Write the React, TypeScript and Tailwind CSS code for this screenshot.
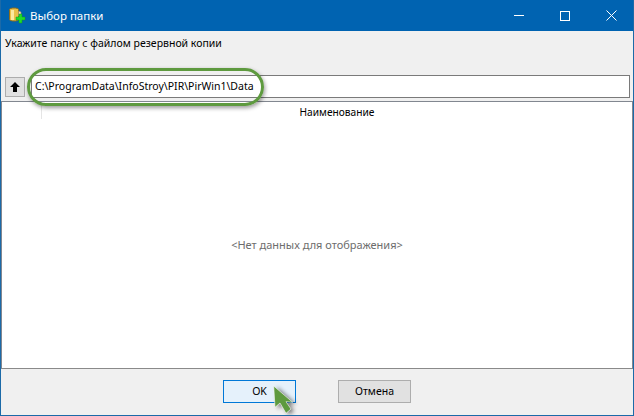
import React from "react";

function FolderIcon() {
  return (
    <svg width="17" height="17" viewBox="0 0 17 17" className="shrink-0">
      <path d="M0.5 2.5 C0.5 0.5 9.5 0.5 9.5 2.5 L9.5 12.5 C9.5 14.5 0.5 14.5 0.5 12.5 Z" fill="#e9c04a" stroke="#8a6d1f" strokeWidth="1" />
      <path d="M2 3 h3 v10 h-3 z" fill="#fbe9a0" />
      <path d="M9.5 4 L12 5 L12 9 L9.5 9 Z" fill="#f5e1c0" stroke="#a08a5a" strokeWidth="0.6" />
      <path d="M10 7 h3 v3 h3 v3 h-3 v3 h-3 v-3 h-3 v-3 h3 z" fill="#1fdc2a" stroke="#159a1d" strokeWidth="0.5" />
    </svg>
  );
}

function WindowButtons() {
  return (
    <div className="flex items-center h-full">
      <div className="w-[46px] flex items-center justify-center">
        <div className="w-[10px] h-px bg-white" />
      </div>
      <div className="w-[46px] flex items-center justify-center">
        <div className="w-[10px] h-[10px] border border-white" />
      </div>
      <div className="w-[46px] flex items-center justify-center">
        <svg width="11" height="11" viewBox="0 0 11 11">
          <path d="M0.5 0.5 L10.5 10.5 M10.5 0.5 L0.5 10.5" stroke="#fff" strokeWidth="1" />
        </svg>
      </div>
    </div>
  );
}

function Cursor() {
  return (
    <svg width="34" height="36" viewBox="0 0 34 36" className="absolute left-[270px] top-[384px] pointer-events-none">
      <defs>
        <filter id="cs" x="-30%" y="-30%" width="170%" height="170%">
          <feGaussianBlur stdDeviation="2" />
        </filter>
      </defs>
      <path d="M6 3 L7 25 L12 21 L18 31 L23 27 L18 20 L25 20 Z" fill="#000" opacity="0.5" filter="url(#cs)" />
      <path d="M2.7 2 L4 23.3 L9 19 L15 29.3 L20 25 L15 17.7 L21.7 18.3 Z" fill="#5e9a3f" stroke="#fff" strokeWidth="0.6" />
    </svg>
  );
}

export default function App() {
  return (
    <div
      className="relative w-[634px] h-[416px] bg-[#f0f0f0] flex flex-col border-b border-x border-[#1c6aa8] overflow-hidden text-[10.5px] text-black"
      style={{ fontFamily: '"Noto Sans", sans-serif' }}
    >
      {/* title bar */}
      <div className="h-[31px] shrink-0 bg-[#0063b1] flex items-center justify-between -mx-px">
        <div className="flex items-center pl-[9px] gap-[4px] text-white text-[11.5px]">
          <FolderIcon />
          <span>Выбор папки</span>
        </div>
        <WindowButtons />
      </div>

      <div className="h-[44px] shrink-0 pl-[4px] pt-[4px] leading-[16px]">
        Укажите папку с файлом резервной копии
      </div>

      {/* path row */}
      <div className="flex items-center h-[23px] shrink-0 pl-[4px] pr-[3px] gap-[6px]">
        <button className="w-[20px] h-[20px] bg-[#e1e1e1] border border-[#adadad] flex items-center justify-center">
          <svg width="10" height="10" viewBox="0 0 10 10">
            <path d="M5 0 L10 5 L7 5 L7 10 L3 10 L3 5 L0 5 Z" fill="#000" />
          </svg>
        </button>
        <div className="flex-1 h-[23px] bg-white border border-[#7a7a7a] flex items-center pl-[3px]">
          C:\ProgramData\InfoStroy\PIR\PirWin1\Data
        </div>
      </div>

      {/* list */}
      <div className="flex-1 mt-[3px] bg-white border border-[#828790] border-b-[#8a8a8a] flex flex-col">
        <div className="h-[20px] shrink-0 flex">
          <div className="w-[40px] h-[17px] border-r border-[#e5e5e5]" />
          <div className="flex-1 text-center text-[10.2px] leading-[20px]">Наименование</div>
        </div>
        <div className="flex-1 flex items-center justify-center text-[11px] text-[#6d6d6d]">
          &lt;Нет данных для отображения&gt;
        </div>
      </div>

      {/* buttons */}
      <div className="h-[46px] shrink-0 flex items-start gap-[42px] pt-[11px] pl-[222px]">
        <button className="w-[73px] h-[23px] bg-[#e5f1fb] border border-[#0078d7]">OK</button>
        <button className="w-[73px] h-[23px] bg-[#e1e1e1] border border-[#adadad]">Отмена</button>
      </div>

      {/* annotation */}
      <div className="absolute left-[26px] top-[68px] w-[237px] h-[38px] rounded-[19px] border-[3px] border-[#5e9a3f] shadow-[1px_2px_4px_rgba(0,0,0,0.4)] pointer-events-none" />
      <Cursor />
    </div>
  );
}
